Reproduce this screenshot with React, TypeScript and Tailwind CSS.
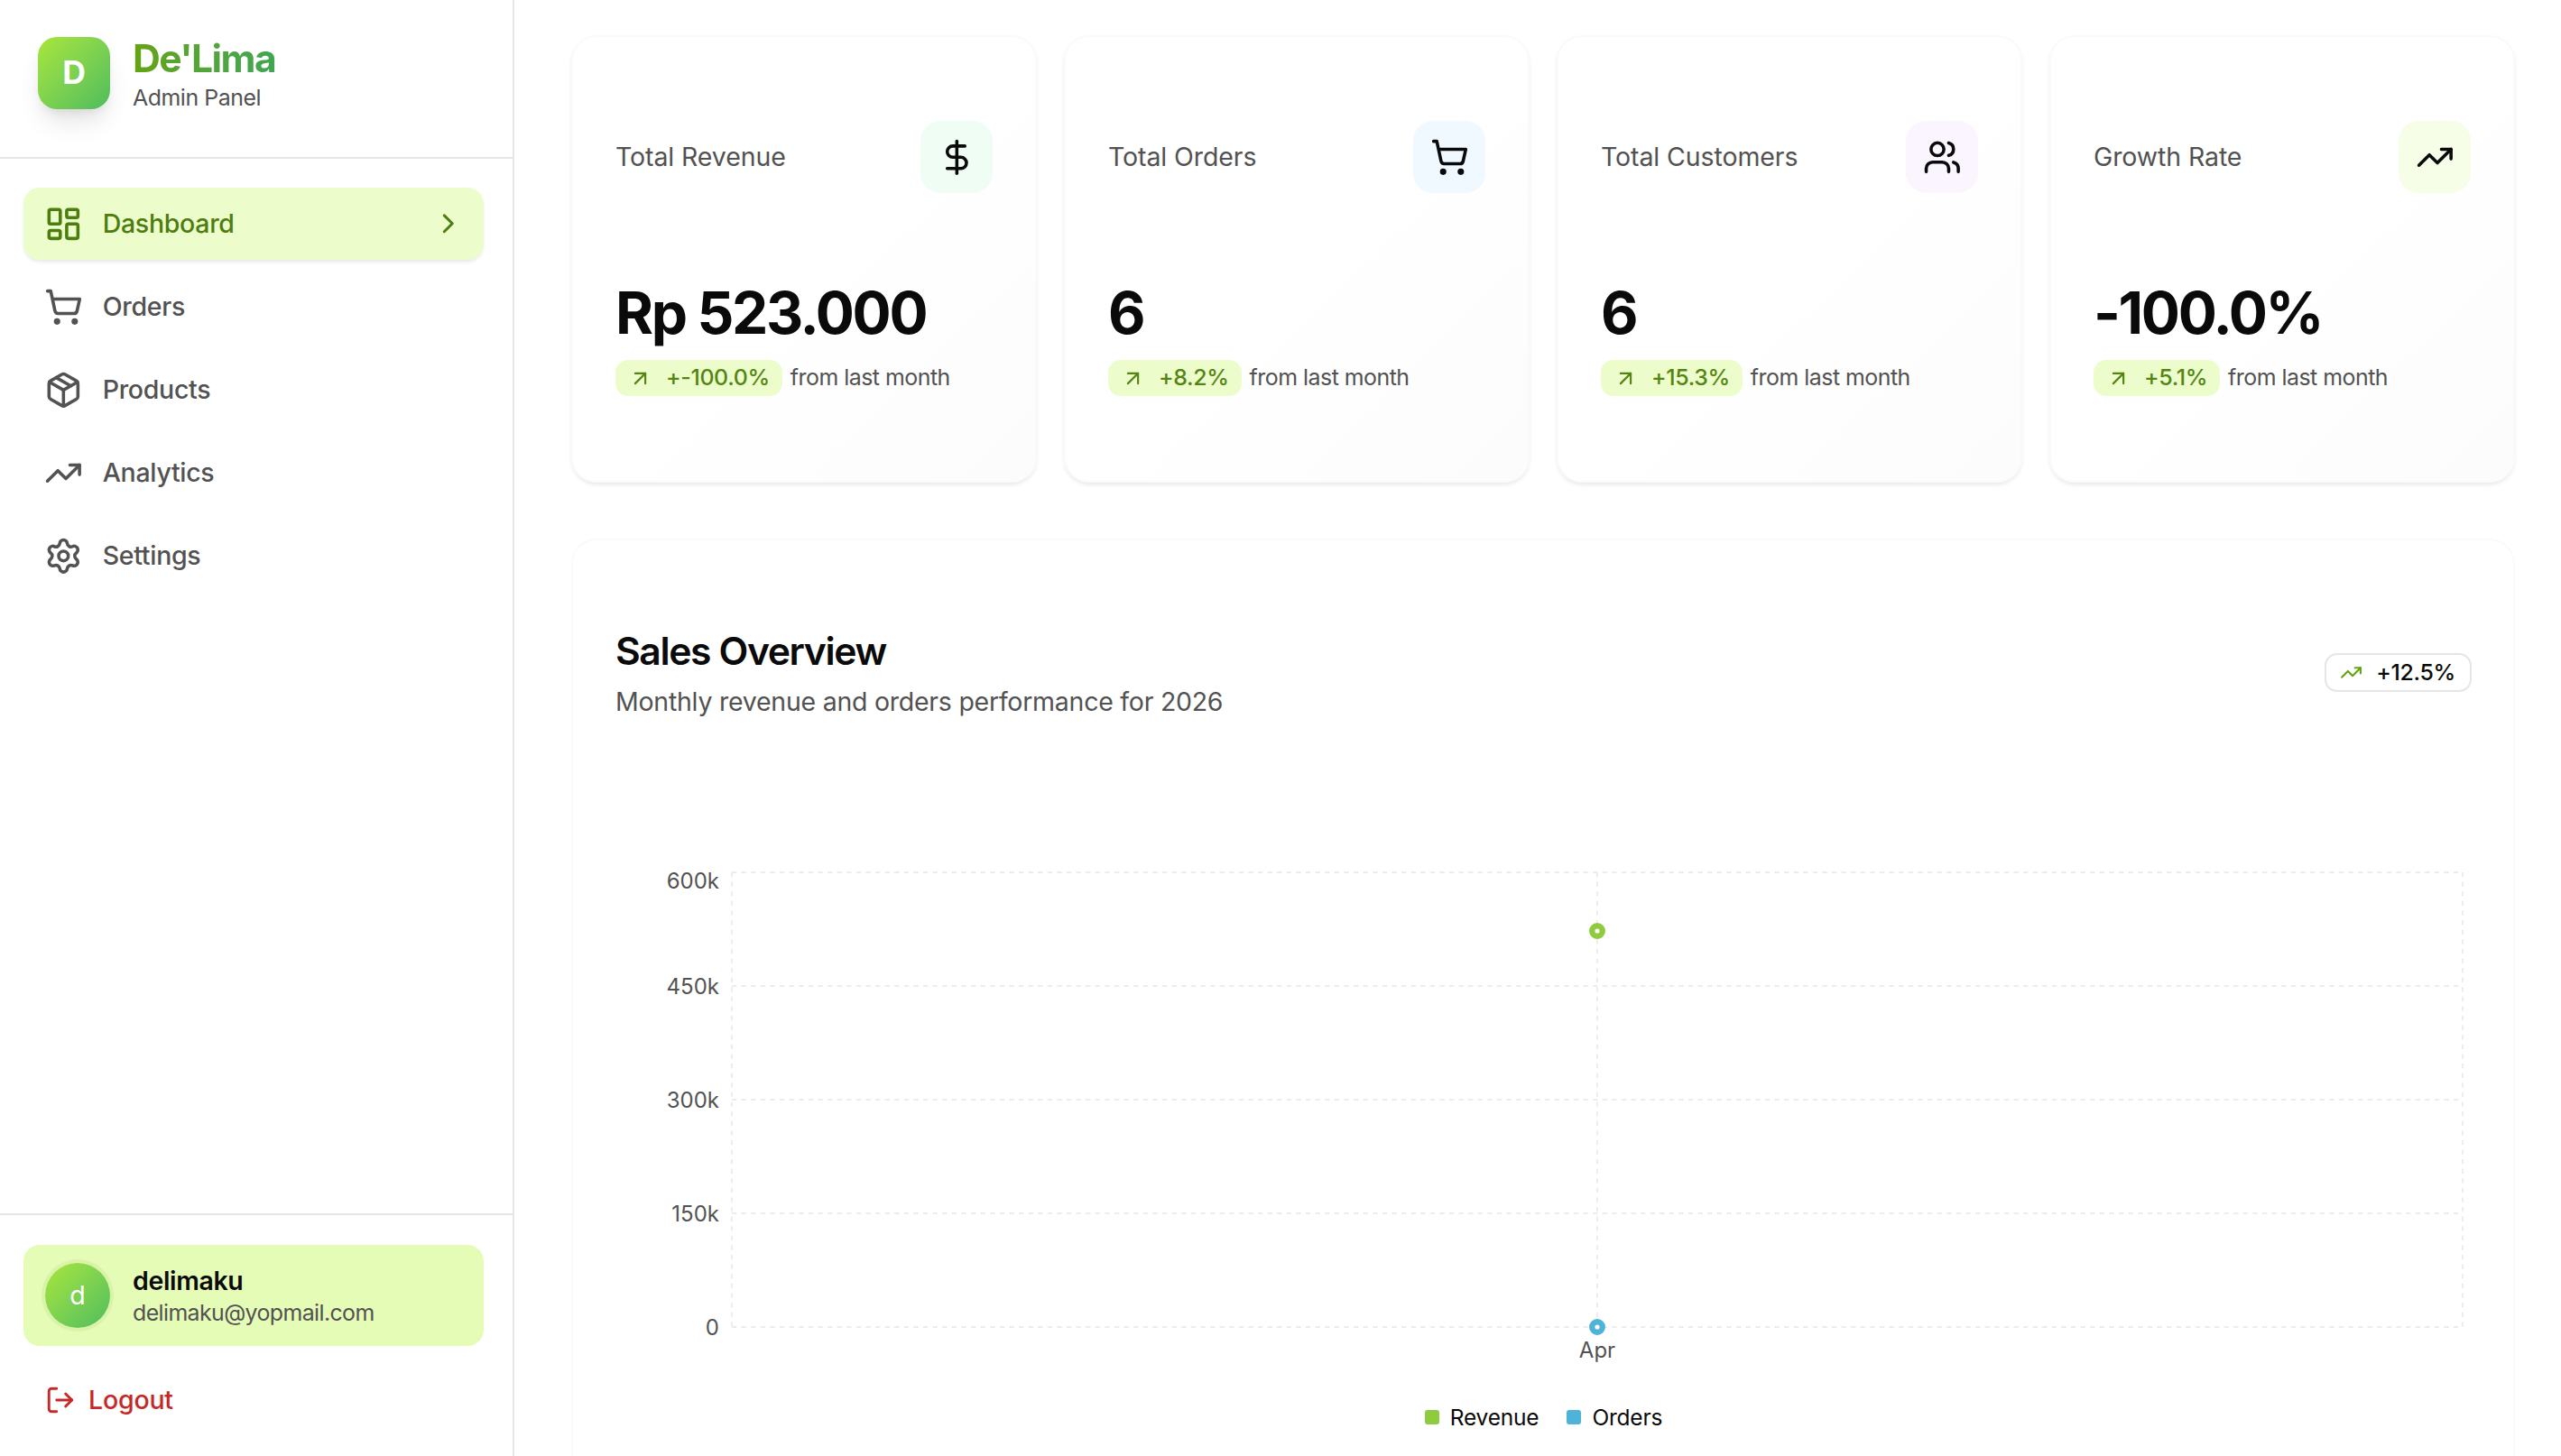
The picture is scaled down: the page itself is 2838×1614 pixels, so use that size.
import React from "react";
import {
  LayoutDashboard,
  ShoppingCart,
  Package,
  TrendingUp,
  Settings,
  LogOut,
  ChevronRight,
  DollarSign,
  Users,
  ArrowUpRight,
} from "lucide-react";

const nav = [
  { label: "Orders", Icon: ShoppingCart },
  { label: "Products", Icon: Package },
  { label: "Analytics", Icon: TrendingUp },
  { label: "Settings", Icon: Settings },
];

const stats = [
  { title: "Total Revenue", value: "Rp 523.000", delta: "+-100.0%", Icon: DollarSign, box: "bg-[#f0fdf4]" },
  { title: "Total Orders", value: "6", delta: "+8.2%", Icon: ShoppingCart, box: "bg-[#f0f9ff]" },
  { title: "Total Customers", value: "6", delta: "+15.3%", Icon: Users, box: "bg-[#faf5ff]" },
  { title: "Growth Rate", value: "-100.0%", delta: "+5.1%", Icon: TrendingUp, box: "bg-[#f7fee7]" },
];

const yLabels = [
  { t: "600k", y: 977, line: 968 },
  { t: "450k", y: 1094, line: 1094 },
  { t: "300k", y: 1220, line: 1220 },
  { t: "150k", y: 1346, line: 1346 },
  { t: "0", y: 1472, line: 1472 },
];

const CHART_X = 682;
const CHART_Y = 950;

function Chart() {
  const gx = (x: number) => x - CHART_X;
  const gy = (y: number) => y - CHART_Y;
  const grid = { stroke: "#ececec", strokeWidth: 1.8, strokeDasharray: "5.3 5.3" };
  return (
    <svg width="2056" height="570" viewBox="0 0 2056 570" className="block">
      {yLabels.map((l) => (
        <line key={l.t} x1={gx(812)} x2={gx(2730)} y1={gy(l.line)} y2={gy(l.line)} {...grid} />
      ))}
      {[812, 1771, 2730].map((x) => (
        <line key={x} x1={gx(x)} x2={gx(x)} y1={gy(968)} y2={gy(1472)} {...grid} />
      ))}
      {yLabels.map((l) => (
        <text key={l.t} x={gx(798)} y={gy(l.y) + 8.5} textAnchor="end" fontSize="24" fill="#525252" fontFamily="Inter, sans-serif">
          {l.t}
        </text>
      ))}
      <text x={gx(1771)} y={gy(1497) + 8.5} textAnchor="middle" fontSize="24" fill="#525252" fontFamily="Inter, sans-serif">
        Apr
      </text>
      <circle cx={gx(1771)} cy={gy(1033)} r="5.8" fill="#ffffff" stroke="#8fcb3f" strokeWidth="6.4" />
      <circle cx={gx(1771)} cy={gy(1472)} r="5.8" fill="#ffffff" stroke="#4fb3d9" strokeWidth="6.4" />
    </svg>
  );
}

export default function App() {
  return (
    <div className="flex h-screen w-full overflow-hidden bg-white font-['Inter',sans-serif] text-[#0a0a0a]">
      <aside className="flex h-full w-[570px] shrink-0 flex-col border-r-2 border-[#e5e5e5] bg-white">
        <div className="flex h-[176px] items-center gap-[25px] border-b-2 border-[#e5e5e5] pl-[42px]">
          <div className="mb-[12px] flex h-[80px] w-[80px] items-center justify-center rounded-[21px] bg-gradient-to-br from-[#a8e63a] to-[#4cbd5c] text-[35.6px] font-bold text-white shadow-[0_18px_28px_-6px_rgba(0,0,0,0.12),0_7px_12px_-5px_rgba(0,0,0,0.08)]">
            D
          </div>
          <div className="flex flex-col">
            <span className="bg-gradient-to-r from-[#65a30d] to-[#3fa652] bg-clip-text text-[42.7px] leading-[42px] font-bold tracking-[-1.6px] text-transparent">
              De'Lima
            </span>
            <span className="text-[24.9px] leading-[45px] tracking-[-0.45px] text-[#525252]">Admin Panel</span>
          </div>
        </div>

        <nav className="flex flex-1 flex-col gap-[12px] pt-[32px] pr-[32px] pl-[26px]">
          <div className="flex h-[80px] items-center gap-[22px] rounded-[18px] bg-[#ecfccb] pr-[21px] pl-[23px] text-[#4d7c0f] shadow-[0_3px_4px_-1px_rgba(0,0,0,0.1)]">
            <LayoutDashboard size={42.7} />
            <span className="flex-1 text-[28.5px] font-medium tracking-[-0.3px]">Dashboard</span>
            <ChevronRight size={35.6} />
          </div>
          {nav.map(({ label, Icon }) => (
            <div key={label} className="flex h-[80px] items-center gap-[22px] pr-[21px] pl-[23px] text-[#525252]">
              <Icon size={42.7} />
              <span className="text-[28.5px] font-medium tracking-[-0.3px]">{label}</span>
            </div>
          ))}
        </nav>

        <div className="flex h-[269px] flex-col gap-[28px] border-t-2 border-[#e5e5e5] pt-[33px] pr-[32px] pl-[26px]">
          <div className="flex h-[112px] items-center gap-[25px] rounded-[18px] bg-[#e5fcb6] pl-[24px]">
            <div className="flex h-[72px] w-[72px] items-center justify-center rounded-full bg-gradient-to-br from-[#a8e63a] to-[#4cbd5c] text-[28.5px] text-white shadow-[0_0_0_4px_#d9f3a8]">
              d
            </div>
            <div className="flex flex-col">
              <span className="text-[28.5px] leading-[40px] font-semibold tracking-[-0.35px] text-[#0a0a0a]">delimaku</span>
              <span className="-mt-[2px] text-[24.9px] leading-[34px] tracking-[-0.6px] text-[#525252]">delimaku@yopmail.com</span>
            </div>
          </div>
          <div className="flex h-[64px] items-center gap-[14px] pl-[24px] text-[#c62828]">
            <LogOut size={34} />
            <span className="text-[28.5px] font-medium tracking-[-0.2px]">Logout</span>
          </div>
        </div>
      </aside>

      <main className="flex min-w-0 flex-1 flex-col gap-[62px] overflow-hidden pt-[39px] pr-[51px] pl-[63px]">
        <div className="grid shrink-0 grid-cols-4 gap-[30px]">
          {stats.map(({ title, value, delta, Icon, box }) => (
            <div
              key={title}
              className="flex h-[496px] flex-col rounded-[28px] border-2 border-[#fafafa] bg-gradient-to-br from-[#ffffff] via-[#ffffff] to-[#fcfcfc] px-[47px] pt-[93px] shadow-[0_3px_5px_-1px_rgba(0,0,0,0.1)]"
            >
              <div className="flex items-center justify-between">
                <span className="text-[28.5px] tracking-[-0.1px] text-[#525252]">{title}</span>
                <div className={`flex h-[80px] w-[80px] items-center justify-center rounded-[22px] ${box}`}>
                  <Icon size={42.7} />
                </div>
              </div>
              <div className="mt-[97px] text-[64px] leading-[72px] font-bold tracking-[-2.35px]">{value}</div>
              <div className="mt-[16px] flex items-center gap-[9px]">
                <div className="flex h-[40px] items-center gap-[15px] rounded-[14px] bg-[#ecfccb] px-[14px] text-[24.9px] font-medium tracking-[-0.35px] text-[#548513]">
                  <ArrowUpRight size={27} strokeWidth={1.9} />
                  <span>{delta}</span>
                </div>
                <span className="text-[24.9px] tracking-[-0.5px] text-[#525252]">from last month</span>
              </div>
            </div>
          ))}
        </div>

        <section className="h-[1200px] shrink-0 rounded-[28px] border-2 border-[#fafafa] bg-white pt-[98px] pr-[46px] pl-[47px]">
          <div className="flex items-start justify-between">
            <div className="flex flex-col">
              <h2 className="text-[42.7px] leading-[50px] font-semibold tracking-[-1.4px]">Sales Overview</h2>
              <p className="mt-[10px] text-[28.5px] leading-[42px] tracking-[-0.25px] text-[#525252]">Monthly revenue and orders performance for 2026</p>
            </div>
            <div className="mt-[27px] flex h-[43px] items-center gap-[15px] rounded-[14px] border-2 border-[#e5e5e5] pr-[16px] pl-[15px] text-[24.9px] font-medium tracking-[-0.3px]">
              <TrendingUp size={25} className="text-[#65a30d]" />
              <span>+12.5%</span>
            </div>
          </div>
          <div className="mt-[150px] -ml-[1px]">
            <Chart />
          </div>
          <div className="mt-[34px] flex justify-center gap-[31px] text-[24.5px] tracking-[-0.2px]">
            <div className="flex items-center gap-[12px]">
              <span className="h-[16px] w-[16px] rounded-[3px] bg-[#8fcb3f]" />
              <span>Revenue</span>
            </div>
            <div className="flex items-center gap-[12px]">
              <span className="h-[16px] w-[16px] rounded-[3px] bg-[#4fb3d9]" />
              <span>Orders</span>
            </div>
          </div>
        </section>
      </main>
    </div>
  );
}
